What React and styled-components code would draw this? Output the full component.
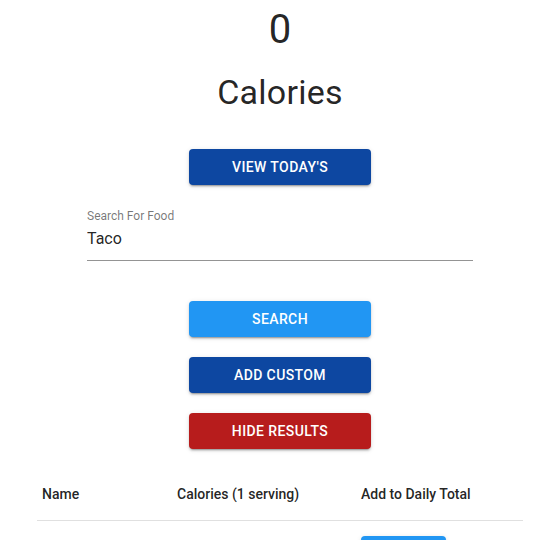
import React, { useState } from "react";
import styled, { createGlobalStyle } from "styled-components";

const GlobalStyle = createGlobalStyle`
  body {
    margin: 0;
    background: #fff;
    font-family: Roboto, "Helvetica", Arial, sans-serif;
    color: rgba(0, 0, 0, 0.87);
  }
`;

const Page = styled.main`
  width: 520px;
  padding-left: 20px;
  display: flex;
  flex-direction: column;
  align-items: center;
`;

const Count = styled.h3`
  margin: 6px 0 0;
  font-size: 40px;
  font-weight: 400;
  line-height: 48px;
`;

const Title = styled.h4`
  margin: 18px 0 0;
  font-size: 34px;
  font-weight: 400;
  line-height: 40px;
  letter-spacing: 0.00735em;
`;

const colors = {
  dark: "#0d47a1",
  light: "#2196f3",
  red: "#b71c1c",
};

const Button = styled.button`
  width: ${(p) => p.$width || "182px"};
  height: 36px;
  margin-top: ${(p) => p.$top || "0"};
  border: none;
  border-radius: 4px;
  background: ${(p) => colors[p.$tone || "dark"]};
  color: #fff;
  font-family: Roboto, sans-serif;
  font-size: 14px;
  font-weight: 500;
  letter-spacing: 0.02857em;
  text-transform: uppercase;
  cursor: pointer;
  box-shadow: 0 3px 1px -2px rgba(0, 0, 0, 0.2), 0 2px 2px 0 rgba(0, 0, 0, 0.14),
    0 1px 5px 0 rgba(0, 0, 0, 0.12);
`;

const Field = styled.label`
  width: 386px;
  margin-top: 24px;
  display: flex;
  flex-direction: column;
  border-bottom: 1px solid rgba(0, 0, 0, 0.42);
`;

const FieldLabel = styled.span`
  font-size: 12px;
  line-height: 14px;
  color: rgba(0, 0, 0, 0.54);
  margin-bottom: 6px;
`;

const Input = styled.input`
  border: none;
  outline: none;
  padding: 0 0 12px;
  font-family: Roboto, sans-serif;
  font-size: 16px;
  line-height: 19px;
  height: 19px;
  color: rgba(0, 0, 0, 0.87);
  background: transparent;
`;

const Table = styled.table`
  width: 486px;
  margin-top: 17px;
  border-collapse: collapse;
  table-layout: fixed;
`;

const Th = styled.th`
  width: ${(p) => p.$w};
  padding: 16px 5px 14px;
  text-align: left;
  font-size: 14px;
  font-weight: 500;
  line-height: 24px;
  border-bottom: 1px solid rgba(224, 224, 224, 1);
`;

const Td = styled.td`
  padding: 15px 5px;
  font-size: 14px;
  line-height: 24px;
  border-bottom: 1px solid rgba(224, 224, 224, 1);
`;

export default function App() {
  const [query, setQuery] = useState("Taco");
  const [showResults, setShowResults] = useState(true);

  return (
    <>
      <GlobalStyle />
      <Page>
        <Count>0</Count>
        <Title>Calories</Title>
        <Button $top="37px">View Today's</Button>
        <Field>
          <FieldLabel>Search For Food</FieldLabel>
          <Input value={query} onChange={(e) => setQuery(e.target.value)} />
        </Field>
        <Button $tone="light" $top="40px">Search</Button>
        <Button $top="20px">Add Custom</Button>
        <Button $tone="red" $top="20px" onClick={() => setShowResults(!showResults)}>
          Hide Results
        </Button>
        {showResults && (
          <Table>
            <thead>
              <tr>
                <Th $w="125px">Name</Th>
                <Th $w="174px">Calories (1 serving)</Th>
                <Th>Add to Daily Total</Th>
              </tr>
            </thead>
            <tbody>
              <tr>
                <Td>Taco</Td>
                <Td>226</Td>
                <Td>
                  <Button $tone="light" $width="85px">Add</Button>
                </Td>
              </tr>
            </tbody>
          </Table>
        )}
      </Page>
    </>
  );
}
